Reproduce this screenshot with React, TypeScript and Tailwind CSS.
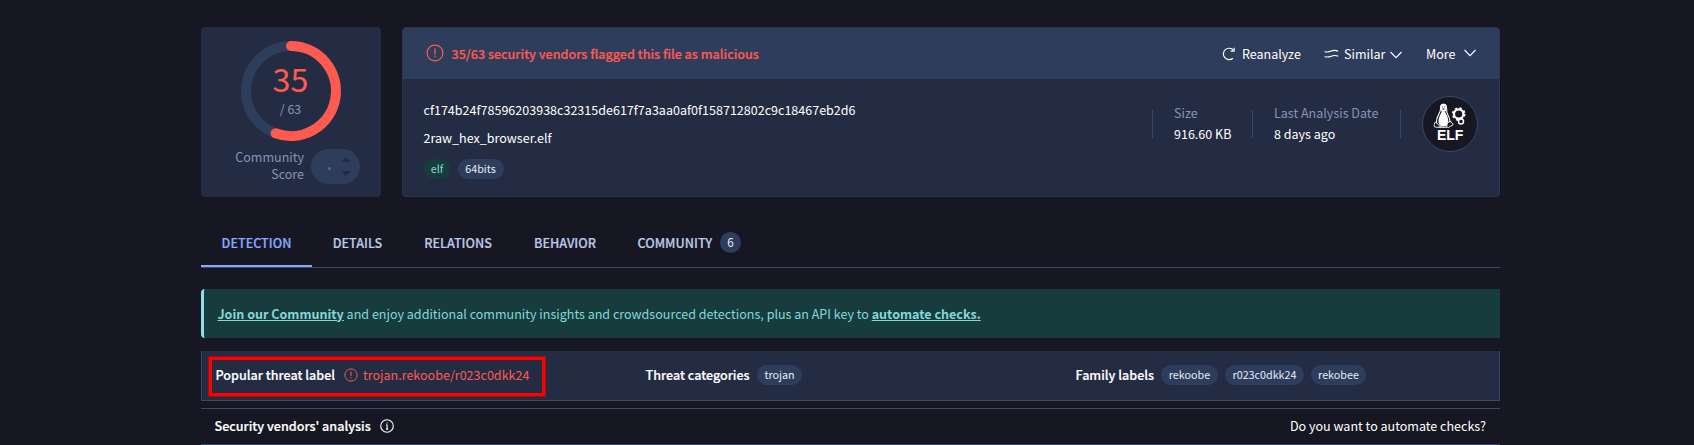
import React from "react";

type IconProps = { className?: string };

function AlertIcon({ className }: IconProps) {
  return (
    <svg viewBox="0 0 18 18" className={className} fill="none" stroke="currentColor" strokeWidth="1.2">
      <circle cx="9" cy="9" r="7.9" />
      <path d="M9 4.6v5.8M9 11.6v1.6" strokeWidth="1.3" />
    </svg>
  );
}

function InfoIcon({ className }: IconProps) {
  return (
    <svg viewBox="0 0 14 14" className={className} fill="none" stroke="currentColor" strokeWidth="1.1">
      <circle cx="7" cy="7" r="6.3" />
      <path d="M6 6h1.1v4M6 10.1h2.200M6.500 4h1" />
    </svg>
  );
}

function RefreshIcon({ className }: IconProps) {
  return (
    <svg viewBox="0 0 14 14" className={className} fill="none" stroke="currentColor" strokeWidth="1.2">
      <path d="M10.9 11.2A5.7 5.7 0 1 1 11.4 3.2" />
      <path d="M8.6 4.1h3.5V.8" />
    </svg>
  );
}

function SimilarIcon({ className }: IconProps) {
  return (
    <svg viewBox="0 0 15 10" className={className} fill="none" stroke="currentColor" strokeWidth="1.1">
      <path d="M.6 2.400c2.600 1.200 4.400.6 6.600-.3 2.300-.9 4.500-1.200 7 .1M.6 7.500c2.600 1.200 4.400.6 6.600-.3 2.300-.9 4.500-1.200 7 .1" />
    </svg>
  );
}

function Chevron({ className }: IconProps) {
  return (
    <svg viewBox="0 0 12 8" className={className} fill="none" stroke="currentColor" strokeWidth="1.1">
      <path d="M.5 1l5.500 5.600L11.500 1" />
    </svg>
  );
}

function ElfBadge() {
  return (
    <svg viewBox="0 0 56 56" className="size-14 shrink-0">
      <circle cx="28" cy="28" r="27.5" fill="#171723" stroke="#3a4768" />
      <path d="M21.500 8.200c-2.100 0-3 1.500-2.900 3.500.1 3-.5 4.300-1.900 6.700-1.500 2.500-2.300 5-2.300 8l1 3.200 4 1.600h5l3.200-1.900c1-3.800.1-7.300-1.700-10.300-1.300-2.200-1.400-4.200-1.400-7 0-2.400-1-3.800-3-3.800z" fill="#171723" stroke="#fff" strokeWidth="1.1" />
      <path d="M18.500 12.500c0-3.500 1-4.700 3-4.700s3.100 1.400 3.100 4.200l-1 3.500h-4.200z" fill="#fff" />
      <path d="M21.300 15c-1.100 0-1.700.8-2.200 2-1.300 2.700-2.600 5-2.600 8 0 3.500 1.900 5.500 5 5.500s4.900-2.100 4.800-5.500c-.1-3-1.300-5.500-2.600-8-.6-1.200-1.200-2-2.400-2z" fill="#fff" />
      <path d="M13.300 26l3.200 2.600 2.200 3-6.200-.7c-.6-1.600-.2-3.300.8-4.900zM25.500 26.500l3.500-1 2.200 3.200-5 2.900-1.500-1z" fill="#171723" stroke="#fff" strokeWidth=".9" />
      <path d="M20 11h.8M22.300 11h.8M20.300 13h2.200" stroke="#171723" strokeWidth="1" />
      <circle cx="36.7" cy="18" r="4.7" fill="none" stroke="#fff" strokeWidth="2.2" />
      <circle cx="36.7" cy="18" r="6.1" fill="none" stroke="#fff" strokeWidth="1.4" strokeDasharray="2.5 2.29" />
      <circle cx="39" cy="25.5" r="2.5" fill="#171723" stroke="#fff" strokeWidth="1.5" />
      <text x="28.2" y="43.6" textAnchor="middle" fill="#fff" fontSize="14" fontWeight="700" fontFamily="Liberation Sans, sans-serif">ELF</text>
    </svg>
  );
}

function Pill({ children, className }: { children: React.ReactNode; className: string }) {
  return <span className={`flex h-5 items-center justify-center rounded-full text-[10.76px] ${className}`}>{children}</span>;
}

function Strong({ children, className }: { children: React.ReactNode; className: string }) {
  return <span className={`text-[12.59px] font-medium [-webkit-text-stroke:0.2px_currentColor] ${className}`}>{children}</span>;
}

function ScoreCard() {
  return (
    <section className="flex h-[170px] w-[180px] flex-col items-center rounded bg-[#242c43] pt-[14px]">
      <div className="grid size-[100px] justify-items-center">
        <svg viewBox="0 0 100 100" className="col-start-1 row-start-1 size-[100px]" fill="none" strokeWidth="10">
          <circle cx="50" cy="50" r="45" stroke="#2f3d5c" />
          <path d="M50 5A45 45 0 1 1 34.6 92.3" stroke="#ff5a50" strokeLinecap="round" />
        </svg>
        <div className="col-start-1 row-start-1 flex flex-col items-center gap-1 pt-5 pr-px">
          <span className="text-[32.3px] leading-[34px] text-[#ff5a50]">35</span>
          <span className="leading-5 text-[#8694b5]">/ 63</span>
        </div>
      </div>
      <div className="mt-[7px] flex w-full items-center gap-[7px] pl-[34px]">
        <div className="w-[69px] pb-0.5 text-right leading-[17px] whitespace-normal text-[#8694b5]">Community Score</div>
        <div className="flex h-[35px] w-[49px] items-center justify-end gap-[10px] rounded-full bg-[#2f3d5c] pr-[9px]">
          <span className="mt-1 size-[3px] rounded-full bg-[#5d6a8a]" />
          <svg viewBox="0 0 10 19" className="h-[19px] w-[10px]" fill="#242c43">
            <path d="M0 5l5-5 5 5zM0 14h10l-5 5z" />
          </svg>
        </div>
      </div>
    </section>
  );
}

function Stat({ label, value, className }: { label: string; value: string; className: string }) {
  return (
    <div className={`flex h-7 flex-col justify-center border-l border-[#3a4768] pl-[21px] leading-[21px] ${className}`}>
      <span className="-mt-0.5 text-[#8694b5]">{label}</span>
      <span>{value}</span>
    </div>
  );
}

function FileCard() {
  return (
    <section className="flex h-[170px] w-[1098px] flex-col overflow-hidden rounded border border-[#2a3550] bg-[#242c43]">
      <header className="flex h-[51px] shrink-0 items-center bg-[#2f3d5c] pr-[23px] pl-[22.5px]">
        <AlertIcon className="mb-px size-[18px] text-[#ff5a50]" />
        <Strong className="ml-2 text-[#ff5a50]">35/63 security vendors flagged this file as malicious</Strong>
        <div className="ml-auto flex items-center">
          <RefreshIcon className="mr-[6px] size-[14px]" />
          <span className="w-[82px]">Reanalyze</span>
          <SimilarIcon className="mr-[5px] h-[10px] w-[15px]" />
          <span className="w-[46px]">Similar</span>
          <Chevron className="mt-0.5 h-2 w-3" />
          <span className="ml-6 w-[38px]">More</span>
          <Chevron className="mb-0.5 h-2 w-3" />
        </div>
      </header>
      <div className="flex pt-[17px] pr-[21px] pl-[20.5px]">
        <div className="flex flex-col">
          <div className="leading-7">cf174b24f78596203938c32315de617f7a3aa0af0f158712802c9c18467eb2d6</div>
          <div className="leading-7">2raw_hex_browser.elf</div>
          <div className="mt-[7px] flex gap-[7px]">
            <Pill className="w-[27px] bg-[#163c3e] text-[#84d8d8]">elf</Pill>
            <Pill className="w-[46px] bg-[#2f3d5c] text-[#e6ecf8]">64bits</Pill>
          </div>
        </div>
        <div className="ml-auto flex h-14 items-center">
          <Stat label="Size" value="916.60 KB" className="w-[100px]" />
          <Stat label="Last Analysis Date" value="8 days ago" className="w-[148px]" />
          <div className="h-7 w-[22px] border-l border-[#3a4768]" />
          <ElfBadge />
        </div>
      </div>
    </section>
  );
}

function Tabs() {
  return (
    <nav className="mt-[21px] flex h-[50px] border-b border-[#3a4768] text-[#bccae6]">
      <div className="flex w-[111px] items-center justify-center border-b-2 border-[#87a9ff] pt-0.5 text-[#87a9ff]">
        <Strong className="">DETECTION</Strong>
      </div>
      <div className="flex w-[91px] items-center justify-center">
        <Strong className="">DETAILS</Strong>
      </div>
      <div className="flex w-[110px] items-center justify-center">
        <Strong className="">RELATIONS</Strong>
      </div>
      <div className="flex w-[104px] items-center justify-center">
        <Strong className="">BEHAVIOR</Strong>
      </div>
      <div className="flex items-center gap-[6px] pl-[20.5px]">
        <Strong className="w-[76.5px]">COMMUNITY</Strong>
        <span className="mb-px flex size-[21px] items-center justify-center rounded-full bg-[#2f3d5c] text-[11.6px] text-[#e6ecf8]">6</span>
      </div>
    </nav>
  );
}

export default function App() {
  return (
    <main className="h-[445px] overflow-hidden bg-[#171723] pt-[27px] pl-[201px] font-['Noto_Sans_CJK_JP','Noto_Sans_CJK_SC',sans-serif] text-[12.54px] leading-5 whitespace-nowrap text-white">
      <div className="w-[1299px]">
        <div className="flex gap-[21px]">
          <ScoreCard />
          <FileCard />
        </div>
        <Tabs />
        <div className="mt-[21px] flex h-[49px] items-center rounded-l border-l-[3px] border-[#8ddfe3] bg-[#163c3e] pl-[13.5px] text-[#84d8d8]">
          <p>
            <a className="font-bold underline">Join our Community</a> and enjoy additional community insights and crowdsourced detections, plus an API key to <a className="font-bold underline">automate checks.</a>
          </p>
        </div>
        <div className="mt-[13px] flex h-[50px] items-center border-x border-b border-[#3a4768] bg-[#242c43] pb-px">
          <div className="mt-[3px] ml-[7px] flex h-[39px] w-[336px] items-center border-[3px] border-[#ff0000] pb-1 pl-[3.5px] shadow-[0_0_0_1px_#9a0f1a]">
            <Strong className="w-[128px]">Popular threat label</Strong>
            <AlertIcon className="size-[14px] text-[#ff5a50]" />
            <span className="ml-[5.5px] text-[#ff5a50]">trojan.rekoobe/r023c0dkk24</span>
          </div>
          <div className="ml-[100.5px] flex w-[430px] items-center">
            <Strong className="w-[111.5px] pb-px">Threat categories</Strong>
            <Pill className="w-[45px] bg-[#2f3d5c] text-[#e6ecf8]">trojan</Pill>
          </div>
          <div className="flex items-center gap-[7px]">
            <Strong className="w-[78.5px] pb-px">Family labels</Strong>
            <Pill className="w-[57px] bg-[#2f3d5c] text-[#e6ecf8]">rekoobe</Pill>
            <Pill className="w-[79px] bg-[#2f3d5c] text-[#e6ecf8]">r023c0dkk24</Pill>
            <Pill className="w-[55px] bg-[#2f3d5c] text-[#e6ecf8]">rekobee</Pill>
          </div>
        </div>
        <div className="mt-[7px] flex h-[37px] items-center justify-between border-y border-[#3a4768] pr-[14px] pb-0.5 pl-[13.5px]">
          <div className="flex items-center">
            <Strong className="w-[165.5px]">Security vendors' analysis</Strong>
            <InfoIcon className="size-[14px]" />
          </div>
          <span>Do you want to automate checks?</span>
        </div>
      </div>
    </main>
  );
}
